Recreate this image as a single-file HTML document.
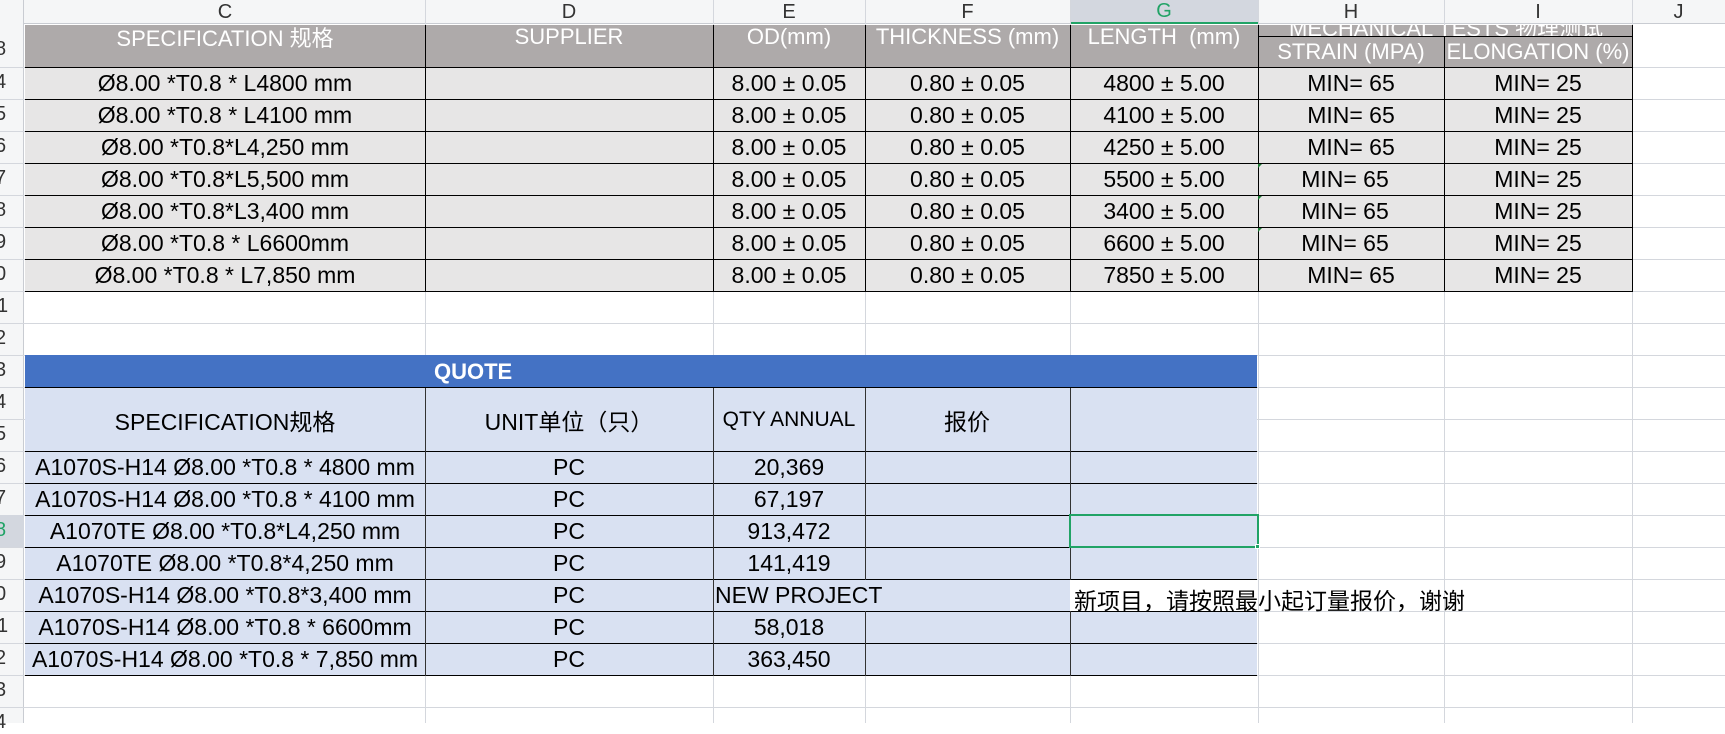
<!DOCTYPE html>
<html><head><meta charset="utf-8"><style>
*{margin:0;padding:0;box-sizing:border-box}
body{width:1725px;height:723px;overflow:hidden;background:#fff;position:relative;font-family:"Liberation Sans","Noto Sans CJK SC",sans-serif;color:#000}
.a{position:absolute}
.c{position:absolute;display:flex;align-items:center;justify-content:center;white-space:nowrap;font-size:23px;overflow:hidden}
.hl{position:absolute;height:1px;background:#d4d7dd}
.vl{position:absolute;width:1px;background:#d4d7dd}
.r{position:absolute;left:-5px;font-size:20px;color:#333}
</style></head><body>
<div class="a" style="left:0;top:0;width:1725px;height:24px;background:#f5f6f7;border-bottom:1px solid #c9ccd2"></div>
<div class="a" style="left:0;top:0;width:24px;height:723px;background:#f5f6f7;border-right:1px solid #c9ccd2"></div>
<div class="c" style="left:25px;top:0;width:400px;height:24px;font-size:20px;color:#333">C</div>
<div class="c" style="left:425px;top:0;width:288px;height:24px;font-size:20px;color:#333">D</div>
<div class="c" style="left:713px;top:0;width:152px;height:24px;font-size:20px;color:#333">E</div>
<div class="c" style="left:865px;top:0;width:205px;height:24px;font-size:20px;color:#333">F</div>
<div class="c" style="left:1070px;top:0;width:188px;height:24px;font-size:20px;color:#21a366;background:#d3d7df;border-bottom:2px solid #21a366">G</div>
<div class="c" style="left:1258px;top:0;width:186px;height:24px;font-size:20px;color:#333">H</div>
<div class="c" style="left:1444px;top:0;width:188px;height:24px;font-size:20px;color:#333">I</div>
<div class="c" style="left:1632px;top:0;width:93px;height:24px;font-size:20px;color:#333">J</div>
<div class="vl" style="left:425px;top:0;height:24px"></div><div class="vl" style="left:713px;top:0;height:24px"></div><div class="vl" style="left:865px;top:0;height:24px"></div><div class="vl" style="left:1070px;top:0;height:24px"></div><div class="vl" style="left:1258px;top:0;height:24px"></div><div class="vl" style="left:1444px;top:0;height:24px"></div><div class="vl" style="left:1632px;top:0;height:24px"></div>
<div class="vl" style="left:425px;top:24px;height:699px"></div><div class="vl" style="left:713px;top:24px;height:699px"></div><div class="vl" style="left:865px;top:24px;height:699px"></div><div class="vl" style="left:1070px;top:24px;height:699px"></div><div class="vl" style="left:1258px;top:24px;height:699px"></div><div class="vl" style="left:1444px;top:24px;height:699px"></div><div class="vl" style="left:1632px;top:24px;height:699px"></div>
<div class="hl" style="left:0;top:67px;width:1725px"></div><div class="hl" style="left:0;top:99px;width:1725px"></div><div class="hl" style="left:0;top:131px;width:1725px"></div><div class="hl" style="left:0;top:163px;width:1725px"></div><div class="hl" style="left:0;top:195px;width:1725px"></div><div class="hl" style="left:0;top:227px;width:1725px"></div><div class="hl" style="left:0;top:259px;width:1725px"></div><div class="hl" style="left:0;top:291px;width:1725px"></div><div class="hl" style="left:0;top:323px;width:1725px"></div><div class="hl" style="left:0;top:355px;width:1725px"></div><div class="hl" style="left:0;top:387px;width:1725px"></div><div class="hl" style="left:0;top:419px;width:1725px"></div><div class="hl" style="left:0;top:451px;width:1725px"></div><div class="hl" style="left:0;top:483px;width:1725px"></div><div class="hl" style="left:0;top:515px;width:1725px"></div><div class="hl" style="left:0;top:547px;width:1725px"></div><div class="hl" style="left:0;top:579px;width:1725px"></div><div class="hl" style="left:0;top:611px;width:1725px"></div><div class="hl" style="left:0;top:643px;width:1725px"></div><div class="hl" style="left:0;top:675px;width:1725px"></div><div class="hl" style="left:0;top:707px;width:1725px"></div>
<div class="r" style="top:38px">8</div>
<div class="r" style="top:71px">4</div>
<div class="r" style="top:103px">5</div>
<div class="r" style="top:135px">6</div>
<div class="r" style="top:167px">7</div>
<div class="r" style="top:199px">8</div>
<div class="r" style="top:231px">9</div>
<div class="r" style="top:263px">0</div>
<div class="r" style="top:295px;left:-3px">1</div>
<div class="r" style="top:327px">2</div>
<div class="r" style="top:359px">3</div>
<div class="r" style="top:391px">4</div>
<div class="r" style="top:423px">5</div>
<div class="r" style="top:455px">6</div>
<div class="r" style="top:487px">7</div>
<div class="a" style="left:0;top:515px;width:24px;height:32px;background:#d3d7df"></div>
<div class="r" style="top:519px;color:#21a366">8</div>
<div class="r" style="top:551px">9</div>
<div class="r" style="top:583px">0</div>
<div class="r" style="top:615px;left:-3px">1</div>
<div class="r" style="top:647px">2</div>
<div class="r" style="top:679px">3</div>
<div class="r" style="top:711px">4</div>

<div class="a" style="left:25px;top:25px;width:1607px;height:43px;background:#aeaaaa;border-bottom:1px solid #000"></div>
<div class="c" style="left:25px;top:25px;width:400px;height:24px;color:#fff;font-size:22px">SPECIFICATION 规格</div>
<div class="c" style="left:425px;top:25px;width:288px;height:24px;color:#fff;font-size:22px">SUPPLIER</div>
<div class="a" style="left:425px;top:25px;width:1px;height:42px;background:#000"></div>
<div class="a" style="left:713px;top:25px;width:1px;height:42px;background:#000"></div>
<div class="a" style="left:865px;top:25px;width:1px;height:42px;background:#000"></div>
<div class="a" style="left:1070px;top:25px;width:1px;height:42px;background:#000"></div>
<div class="a" style="left:1258px;top:25px;width:1px;height:42px;background:#000"></div>
<div class="a" style="left:1632px;top:25px;width:1px;height:42px;background:#000"></div>
<div class="c" style="left:713px;top:25px;width:152px;height:24px;color:#fff;font-size:22px">OD(mm)</div>
<div class="c" style="left:865px;top:25px;width:205px;height:24px;color:#fff;font-size:22px">THICKNESS (mm)</div>
<div class="c" style="left:1070px;top:25px;width:188px;height:24px;color:#fff;font-size:22px">LENGTH &nbsp;(mm)</div>
<div class="a" style="left:1259px;top:25px;width:373px;height:11px;overflow:hidden;z-index:3"><div style="position:absolute;left:30px;top:-14px;color:#fff;font-size:22px;white-space:nowrap">MECHANICAL TESTS 物理测试</div></div>
<div class="a" style="left:1258px;top:36px;width:374px;height:1px;background:#000"></div>
<div class="c" style="left:1258px;top:37px;width:186px;height:30px;color:#fff;font-size:22px">STRAIN (MPA)</div>
<div class="c" style="left:1444px;top:37px;width:188px;height:30px;color:#fff;font-size:22px">ELONGATION (%)</div>
<div class="a" style="left:1444px;top:36px;width:1px;height:31px;background:#000"></div>

<div class="a" style="left:25px;top:67px;width:1608px;height:225px;background:#e7e6e6;border-top:1px solid #000;border-right:1px solid #000;border-bottom:1px solid #000"></div>
<div class="a" style="left:25px;top:99px;width:1608px;height:1px;background:#000"></div>
<div class="a" style="left:25px;top:131px;width:1608px;height:1px;background:#000"></div>
<div class="a" style="left:25px;top:163px;width:1608px;height:1px;background:#000"></div>
<div class="a" style="left:25px;top:195px;width:1608px;height:1px;background:#000"></div>
<div class="a" style="left:25px;top:227px;width:1608px;height:1px;background:#000"></div>
<div class="a" style="left:25px;top:259px;width:1608px;height:1px;background:#000"></div>
<div class="a" style="left:425px;top:67px;width:1px;height:225px;background:#000"></div>
<div class="a" style="left:713px;top:67px;width:1px;height:225px;background:#000"></div>
<div class="a" style="left:865px;top:67px;width:1px;height:225px;background:#000"></div>
<div class="a" style="left:1070px;top:67px;width:1px;height:225px;background:#000"></div>
<div class="a" style="left:1258px;top:67px;width:1px;height:225px;background:#000"></div>
<div class="a" style="left:1444px;top:67px;width:1px;height:225px;background:#000"></div>
<div class="a" style="left:1258px;top:164px;width:0;height:0;border-top:4px solid #1e7b34;border-right:4px solid transparent"></div>
<div class="a" style="left:1258px;top:196px;width:0;height:0;border-top:4px solid #1e7b34;border-right:4px solid transparent"></div>
<div class="a" style="left:1258px;top:228px;width:0;height:0;border-top:4px solid #1e7b34;border-right:4px solid transparent"></div>

<div class="c" style="left:25px;top:68px;width:400px;height:31px">Ø8.00 *T0.8 * L4800 mm</div>
<div class="c" style="left:25px;top:100px;width:400px;height:31px">Ø8.00 *T0.8 * L4100 mm</div>
<div class="c" style="left:25px;top:132px;width:400px;height:31px">Ø8.00 *T0.8*L4,250 mm</div>
<div class="c" style="left:25px;top:164px;width:400px;height:31px">Ø8.00 *T0.8*L5,500 mm</div>
<div class="c" style="left:25px;top:196px;width:400px;height:31px">Ø8.00 *T0.8*L3,400 mm</div>
<div class="c" style="left:25px;top:228px;width:400px;height:31px">Ø8.00 *T0.8 * L6600mm</div>
<div class="c" style="left:25px;top:260px;width:400px;height:31px">Ø8.00 *T0.8 * L7,850 mm</div>

<div class="c" style="left:713px;top:68px;width:152px;height:31px">8.00 ± 0.05</div>
<div class="c" style="left:713px;top:100px;width:152px;height:31px">8.00 ± 0.05</div>
<div class="c" style="left:713px;top:132px;width:152px;height:31px">8.00 ± 0.05</div>
<div class="c" style="left:713px;top:164px;width:152px;height:31px">8.00 ± 0.05</div>
<div class="c" style="left:713px;top:196px;width:152px;height:31px">8.00 ± 0.05</div>
<div class="c" style="left:713px;top:228px;width:152px;height:31px">8.00 ± 0.05</div>
<div class="c" style="left:713px;top:260px;width:152px;height:31px">8.00 ± 0.05</div>

<div class="c" style="left:865px;top:68px;width:205px;height:31px">0.80 ± 0.05</div>
<div class="c" style="left:865px;top:100px;width:205px;height:31px">0.80 ± 0.05</div>
<div class="c" style="left:865px;top:132px;width:205px;height:31px">0.80 ± 0.05</div>
<div class="c" style="left:865px;top:164px;width:205px;height:31px">0.80 ± 0.05</div>
<div class="c" style="left:865px;top:196px;width:205px;height:31px">0.80 ± 0.05</div>
<div class="c" style="left:865px;top:228px;width:205px;height:31px">0.80 ± 0.05</div>
<div class="c" style="left:865px;top:260px;width:205px;height:31px">0.80 ± 0.05</div>

<div class="c" style="left:1070px;top:68px;width:188px;height:31px">4800 ± 5.00</div>
<div class="c" style="left:1070px;top:100px;width:188px;height:31px">4100 ± 5.00</div>
<div class="c" style="left:1070px;top:132px;width:188px;height:31px">4250 ± 5.00</div>
<div class="c" style="left:1070px;top:164px;width:188px;height:31px">5500 ± 5.00</div>
<div class="c" style="left:1070px;top:196px;width:188px;height:31px">3400 ± 5.00</div>
<div class="c" style="left:1070px;top:228px;width:188px;height:31px">6600 ± 5.00</div>
<div class="c" style="left:1070px;top:260px;width:188px;height:31px">7850 ± 5.00</div>

<div class="c" style="left:1258px;top:68px;width:186px;height:31px">MIN= 65</div>
<div class="c" style="left:1258px;top:100px;width:186px;height:31px">MIN= 65</div>
<div class="c" style="left:1258px;top:132px;width:186px;height:31px">MIN= 65</div>
<div class="c" style="left:1252px;top:164px;width:186px;height:31px">MIN= 65</div>
<div class="c" style="left:1252px;top:196px;width:186px;height:31px">MIN= 65</div>
<div class="c" style="left:1252px;top:228px;width:186px;height:31px">MIN= 65</div>
<div class="c" style="left:1258px;top:260px;width:186px;height:31px">MIN= 65</div>

<div class="c" style="left:1444px;top:68px;width:188px;height:31px">MIN= 25</div>
<div class="c" style="left:1444px;top:100px;width:188px;height:31px">MIN= 25</div>
<div class="c" style="left:1444px;top:132px;width:188px;height:31px">MIN= 25</div>
<div class="c" style="left:1444px;top:164px;width:188px;height:31px">MIN= 25</div>
<div class="c" style="left:1444px;top:196px;width:188px;height:31px">MIN= 25</div>
<div class="c" style="left:1444px;top:228px;width:188px;height:31px">MIN= 25</div>
<div class="c" style="left:1444px;top:260px;width:188px;height:31px">MIN= 25</div>

<div class="a" style="left:25px;top:355px;width:1232px;height:33px;background:#4472c4;border-bottom:1px solid #000"></div>
<div class="a" style="left:434px;top:359px;color:#fff;font-weight:bold;font-size:22px">QUOTE</div>
<div class="a" style="left:25px;top:388px;width:1232px;height:288px;background:#d9e1f2;border-bottom:1px solid #000"></div>
<div class="a" style="left:25px;top:451px;width:1232px;height:1px;background:#000"></div>
<div class="a" style="left:25px;top:483px;width:1232px;height:1px;background:#000"></div>
<div class="a" style="left:25px;top:515px;width:1232px;height:1px;background:#000"></div>
<div class="a" style="left:25px;top:547px;width:1232px;height:1px;background:#000"></div>
<div class="a" style="left:25px;top:579px;width:1232px;height:1px;background:#000"></div>
<div class="a" style="left:25px;top:611px;width:1232px;height:1px;background:#000"></div>
<div class="a" style="left:25px;top:643px;width:1232px;height:1px;background:#000"></div>
<div class="a" style="left:425px;top:388px;width:1px;height:288px;background:#333"></div>
<div class="a" style="left:713px;top:388px;width:1px;height:288px;background:#333"></div>
<div class="a" style="left:865px;top:388px;width:1px;height:192px;background:#333"></div>
<div class="a" style="left:865px;top:611px;width:1px;height:65px;background:#333"></div>
<div class="a" style="left:1070px;top:388px;width:1px;height:192px;background:#333"></div>
<div class="a" style="left:1070px;top:611px;width:1px;height:65px;background:#333"></div>
<div class="a" style="left:1070px;top:580px;width:187px;height:31px;background:#fff"></div>

<div class="c" style="left:25px;top:388px;width:400px;height:63px">SPECIFICATION规格</div>
<div class="c" style="left:425px;top:388px;width:288px;height:63px">UNIT单位（只）</div>
<div class="c" style="left:713px;top:388px;width:152px;height:63px;font-size:21px">QTY ANNUAL</div>
<div class="c" style="left:865px;top:388px;width:205px;height:63px;justify-content:flex-start;padding-left:79px">报价</div>

<div class="c" style="left:25px;top:452px;width:400px;height:31px">A1070S-H14 Ø8.00 *T0.8 * 4800 mm</div>
<div class="c" style="left:25px;top:484px;width:400px;height:31px">A1070S-H14 Ø8.00 *T0.8 * 4100 mm</div>
<div class="c" style="left:25px;top:516px;width:400px;height:31px">A1070TE Ø8.00 *T0.8*L4,250 mm</div>
<div class="c" style="left:25px;top:548px;width:400px;height:31px">A1070TE Ø8.00 *T0.8*4,250 mm</div>
<div class="c" style="left:25px;top:580px;width:400px;height:31px">A1070S-H14 Ø8.00 *T0.8*3,400 mm</div>
<div class="c" style="left:25px;top:612px;width:400px;height:31px">A1070S-H14 Ø8.00 *T0.8 * 6600mm</div>
<div class="c" style="left:25px;top:644px;width:400px;height:31px">A1070S-H14 Ø8.00 *T0.8 * 7,850 mm</div>

<div class="c" style="left:425px;top:452px;width:288px;height:31px">PC</div>
<div class="c" style="left:425px;top:484px;width:288px;height:31px">PC</div>
<div class="c" style="left:425px;top:516px;width:288px;height:31px">PC</div>
<div class="c" style="left:425px;top:548px;width:288px;height:31px">PC</div>
<div class="c" style="left:425px;top:580px;width:288px;height:31px">PC</div>
<div class="c" style="left:425px;top:612px;width:288px;height:31px">PC</div>
<div class="c" style="left:425px;top:644px;width:288px;height:31px">PC</div>

<div class="c" style="left:713px;top:452px;width:152px;height:31px">20,369</div>
<div class="c" style="left:713px;top:484px;width:152px;height:31px">67,197</div>
<div class="c" style="left:713px;top:516px;width:152px;height:31px">913,472</div>
<div class="c" style="left:713px;top:548px;width:152px;height:31px">141,419</div>
<div class="c" style="left:715px;top:580px;width:200px;height:31px;justify-content:flex-start">NEW PROJECT</div>
<div class="c" style="left:713px;top:612px;width:152px;height:31px">58,018</div>
<div class="c" style="left:713px;top:644px;width:152px;height:31px">363,450</div>

<div class="a" style="left:1074px;top:582px;font-size:23px;white-space:nowrap">新项目，请按照最小起订量报价，谢谢</div>

<div class="a" style="left:1069px;top:514px;width:190px;height:34px;border:2px solid #21a366"></div>
<div class="a" style="left:1255px;top:544px;width:5px;height:5px;background:#21a366;border:1px solid #fff"></div>
</body></html>
